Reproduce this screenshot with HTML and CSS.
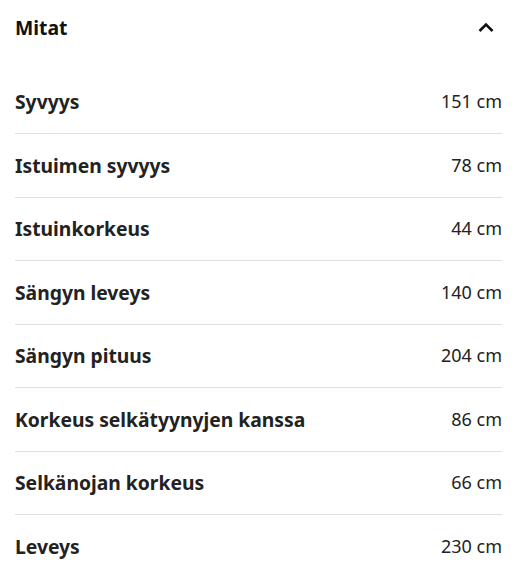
FILE: index.html
```html
<!DOCTYPE html>
<html>
<head>
<link rel="stylesheet" href="styles.css">
</head>
<body>

<section class="dimensions">
  <div class="dimensions-header">
    <h2>Mitat</h2>
    <button class="toggle" aria-label="Piilota">
      <svg width="24" height="24" viewBox="0 0 24 24">
        <path d="M5.5 16 12 9.5l6.5 6.5" fill="none" stroke="#111" stroke-width="2.6"/>
      </svg>
    </button>
  </div>

  <dl class="dimension-list">
    <div class="dimension-row"><dt>Syvyys</dt><dd>151 cm</dd></div>
    <div class="dimension-row"><dt>Istuimen syvyys</dt><dd>78 cm</dd></div>
    <div class="dimension-row"><dt>Istuinkorkeus</dt><dd>44 cm</dd></div>
    <div class="dimension-row"><dt>Sängyn leveys</dt><dd>140 cm</dd></div>
    <div class="dimension-row"><dt>Sängyn pituus</dt><dd>204 cm</dd></div>
    <div class="dimension-row"><dt>Korkeus selkätyynyjen kanssa</dt><dd>86 cm</dd></div>
    <div class="dimension-row"><dt>Selkänojan korkeus</dt><dd>66 cm</dd></div>
    <div class="dimension-row"><dt>Leveys</dt><dd>230 cm</dd></div>
  </dl>
</section>

</body>
</html>
```

FILE: styles.css
```css
body {
  margin: 0;
  font-family: "Noto Sans", sans-serif;
  color: #111;
  background-color: #fff;
}

.dimensions {
  padding: 0 19px 0 15px;
}

.dimensions-header {
  display: flex;
  justify-content: space-between;
  align-items: center;
  padding-top: 13.5px;
}

.dimensions-header h2 {
  margin: 0;
  font-size: 19.4px;
  line-height: 27px;
  font-weight: bold;
}

.toggle {
  border: none;
  background: none;
  padding: 0;
  margin-right: 4px;
  cursor: pointer;
  display: flex;
}

.dimension-list {
  margin: 30px 0 0 0;
}

.dimension-row {
  display: flex;
  justify-content: space-between;
  align-items: center;
  padding: 17.5px 0 18px 0;
  border-bottom: 1px solid #dfdfdf;
  font-size: 18px;
  line-height: 27px;
}

.dimension-row:last-child {
  border-bottom: none;
}

.dimension-row dt {
  font-weight: bold;
  font-size: 19.3px;
  line-height: 27px;
  color: #222;
}

.dimension-row dd {
  margin: 0;
  color: #222;
}
```
